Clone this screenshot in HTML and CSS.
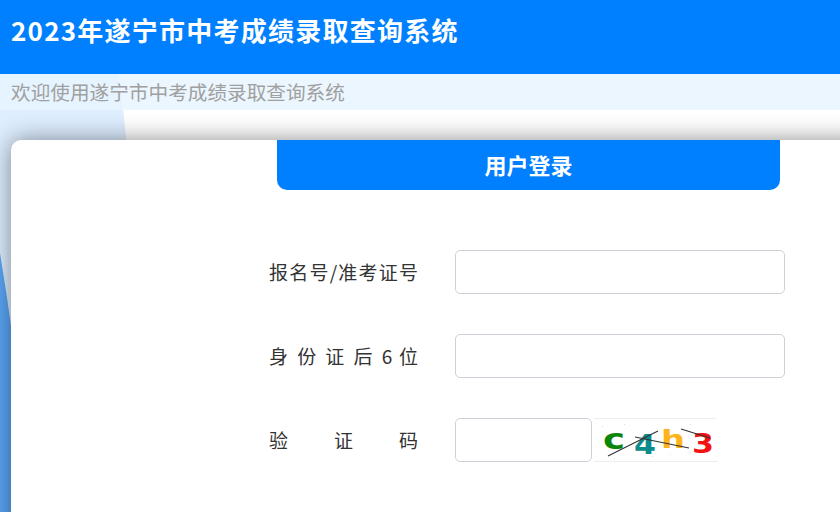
FILE: index.html
```html
<!DOCTYPE html>
<html lang="zh-CN">
<head>
    <meta charset="UTF-8">
    <meta name="viewport" content="width=device-width, initial-scale=1.0">
    <title>2023年遂宁市中考成绩录取查询系统</title>
    <link rel="stylesheet" href="styles.css">
</head>
<body>

    <!-- Page background shapes -->
    <svg class="bg-shapes" width="840" height="512" viewBox="0 0 840 512">
        <path d="M0 74 H118 Q124 110 127 150 H0 Z" fill="#deeeff"/>
        <path d="M0 150 H20 V340 H0 Z" fill="#deeeff"/>
        <path d="M0 253 Q7 295 13 340 V512 H0 Z" fill="#5aa6f6"/>
    </svg>

    <!-- Header -->
    <header class="top-bar">
        <h1>2023年遂宁市中考成绩录取查询系统</h1>
    </header>
    <div class="welcome">欢迎使用遂宁市中考成绩录取查询系统</div>

    <!-- Login card -->
    <div class="card">
        <div class="card-title">用户登录</div>
        <form class="login-form">
            <div class="form-row">
                <label class="form-label" for="ksh">报名号/准考证号</label>
                <input class="form-input" id="ksh" type="text">
            </div>
            <div class="form-row">
                <label class="form-label" for="sfz">身 份 证 后 6 位</label>
                <input class="form-input" id="sfz" type="text">
            </div>
            <div class="form-row">
                <label class="form-label" for="yzm">验 证 码</label>
                <input class="form-input code-input" id="yzm" type="text">
                <svg class="captcha" width="124" height="44" viewBox="0 0 124 44">
                    <path d="M0 .5 H122 M0 43.5 H124" stroke="#eeeeee" fill="none"/>
                    <path d="M8 8h1v1h-1z M30 6h1v1h-1z M58 38h1v1h-1z M76 36h1v1h-1z M20 40h1v1h-1z M96 6h1v1h-1z" fill="#dddddd"/>
                    <g class="captcha-chars">
                        <text x="9" y="31" fill="#0b860b" font-size="29" textLength="22" lengthAdjust="spacingAndGlyphs">c</text>
                        <text x="40" y="36" fill="#0e8c8c" font-size="26" textLength="22" lengthAdjust="spacingAndGlyphs">4</text>
                        <text x="67" y="30" fill="#ffb31a" font-size="25" textLength="24" lengthAdjust="spacingAndGlyphs">h</text>
                        <text x="98" y="35" fill="#f21212" font-size="27" textLength="22" lengthAdjust="spacingAndGlyphs">3</text>
                    </g>
                    <path d="M14 38 L64 13 M41 19 L95 30 M87 11 L116 20" stroke="#333333" stroke-width="1.1" fill="none"/>
                </svg>
            </div>
        </form>
    </div>

</body>
</html>
```

FILE: styles.css
```css
html, body {
    height: 100%;
}

body {
    margin: 0;
    position: relative;
    overflow: hidden;
    background-color: #ffffff;
    font-family: "Noto Sans CJK SC", "Noto Sans", sans-serif;
    color: #333333;
}

.bg-shapes {
    position: absolute;
    top: 0;
    left: 0;
}

.top-bar {
    position: relative;
    height: 74px;
    background-color: #0080ff;
}

.top-bar h1 {
    margin: 0;
    padding: 10px 0 0 11px;
    font-size: 26px;
    line-height: 40px;
    font-weight: 700;
    letter-spacing: 1.25px;
    color: #ffffff;
}

.welcome {
    position: relative;
    height: 36px;
    padding-left: 11px;
    background-color: rgba(232, 245, 255, 0.85);
    font-size: 19.65px;
    line-height: 36px;
    color: #a0a0a0;
}

.card {
    position: relative;
    width: 1035px;
    height: 500px;
    margin: 30px 0 0 11px;
    background-color: #ffffff;
    border-radius: 10px;
    box-shadow: 0 0 25px rgba(0, 0, 0, 0.45);
}

.card-title {
    width: 503px;
    height: 50px;
    margin: 0 auto;
    background-color: #0080ff;
    border-radius: 0 0 10px 10px;
    text-align: center;
    font-size: 22px;
    line-height: 49px;
    font-weight: 700;
    color: #ffffff;
}

.login-form {
    padding: 60px 0 0 258px;
}

.form-row {
    display: flex;
    align-items: center;
    margin-bottom: 40px;
}

.form-label {
    width: 149px;
    height: 44px;
    margin-right: 37px;
    font-size: 19px;
    line-height: 44px;
    text-align: justify;
    text-align-last: justify;
}

.form-input {
    box-sizing: border-box;
    width: 330px;
    height: 44px;
    padding: 0 10px;
    background-color: #ffffff;
    border: 1px solid #d0d0d8;
    border-radius: 5px;
}

.code-input {
    width: 137px;
    margin-right: 2px;
}

.captcha-chars {
    font-family: "DejaVu Sans", sans-serif;
    font-weight: 700;
}
```
